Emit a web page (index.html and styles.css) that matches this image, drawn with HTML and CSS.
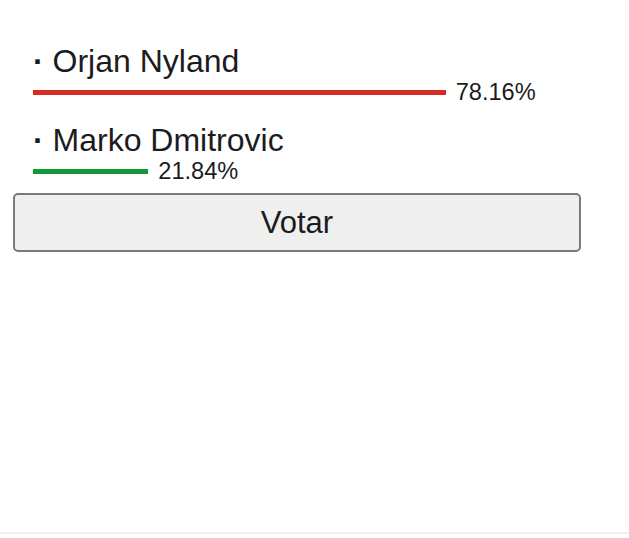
FILE: index.html
```html
<!DOCTYPE html>
<html lang="es">
<head>
    <meta charset="UTF-8">
    <meta name="viewport" content="width=device-width, initial-scale=1.0">
    <title>Encuesta</title>
    <link rel="stylesheet" href="styles.css">
</head>
<body>
    <div class="page">
        <!-- Poll results -->
        <ul class="poll-options">
            <li class="poll-option">
                <div class="option-name"><span class="option-dot">·</span> Orjan Nyland</div>
                <div class="option-result">
                    <div class="result-bar bar-red" style="width: 78.16%;"></div>
                    <span class="result-pct">78.16%</span>
                </div>
            </li>
            <li class="poll-option">
                <div class="option-name"><span class="option-dot">·</span> Marko Dmitrovic</div>
                <div class="option-result">
                    <div class="result-bar bar-green" style="width: 21.84%;"></div>
                    <span class="result-pct">21.84%</span>
                </div>
            </li>
        </ul>
        <button class="vote-button" type="button">Votar</button>
    </div>
</body>
</html>
```

FILE: styles.css
```css
/* Basic styling for the page */
body {
    margin: 0;
    padding: 0;
    background-color: #fff;
    font-family: "Liberation Sans", Arial, sans-serif;
    color: #1c1c1e;
}

.page {
    height: 534px;
    box-sizing: border-box;
    padding: 43px 13px 0;
    border-bottom: 2px solid #efefef;
}

/* Poll options */
.poll-options {
    list-style: none;
    margin: 0;
    padding: 0 0 0 20px;
    display: flex;
    flex-direction: column;
    gap: 16px;
}

.option-name {
    font-size: 32px;
    line-height: 36px;
}

.option-dot {
    font-weight: bold;
}

.option-result {
    width: 528px;
    height: 27px;
    display: flex;
    align-items: center;
    gap: 10px;
}

.result-bar {
    flex: none;
    height: 5px;
}

.bar-red {
    background-color: #d52b24;
}

.bar-green {
    background-color: #12983a;
}

.result-pct {
    font-size: 23.6px;
    line-height: 27px;
    white-space: nowrap;
}

/* Vote button */
.vote-button {
    display: block;
    box-sizing: border-box;
    width: 568px;
    height: 59px;
    margin-top: 8px;
    padding: 0;
    border: 2px solid #7a7a7a;
    border-radius: 5px;
    background-color: #efefef;
    color: #1c1c1e;
    font-family: "Liberation Sans", Arial, sans-serif;
    font-size: 31px;
}
```
